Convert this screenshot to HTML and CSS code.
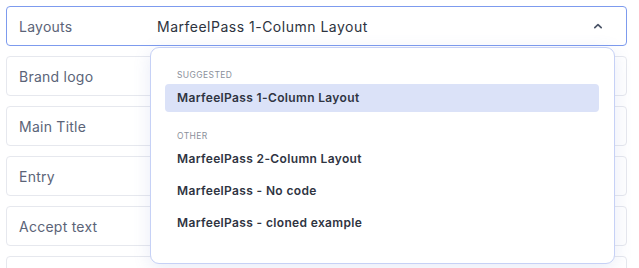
FILE: index.html
```html
<!DOCTYPE html>
<html lang="en">
<head>
    <meta charset="UTF-8">
    <title>Layouts</title>
    <link rel="stylesheet" href="styles.css">
</head>
<body>
    <div class="form">
        <!-- Layout selector (open) -->
        <div class="field field-active">
            <span class="field-label">Layouts</span>
            <span class="field-value">MarfeelPass 1-Column Layout</span>
            <svg class="chevron" width="12" height="12" viewBox="0 0 12 12">
                <path d="M2.8 7.6 L6 4.6 L9.2 7.6" fill="none" stroke="#4b5568" stroke-width="1.7" stroke-linecap="round" stroke-linejoin="round"/>
            </svg>

            <div class="dropdown">
                <div class="group-title">Suggested</div>
                <div class="option selected">MarfeelPass 1-Column Layout</div>

                <div class="group-title other">Other</div>
                <div class="option">MarfeelPass 2-Column Layout</div>
                <div class="option">MarfeelPass - No code</div>
                <div class="option">MarfeelPass - cloned example</div>
            </div>
        </div>

        <div class="field"><span class="field-label">Brand logo</span></div>
        <div class="field"><span class="field-label">Main Title</span></div>
        <div class="field"><span class="field-label">Entry</span></div>
        <div class="field"><span class="field-label">Accept text</span></div>
        <div class="field"><span class="field-label"></span></div>
    </div>
</body>
</html>
```

FILE: styles.css
```css
* {
    margin: 0;
    padding: 0;
    box-sizing: border-box;
}

body {
    font-family: Inter, 'Noto Sans', sans-serif;
    background: #fff;
    color: #2d3340;
    overflow: hidden;
}

.form {
    height: 100vh;
    overflow: hidden;
    padding: 6px 12px 0 6px;
    display: flex;
    flex-direction: column;
    gap: 10px;
}

/* Rows */
.field {
    position: relative;
    height: 40px;
    border: 1px solid #e6e8ee;
    border-radius: 4px;
    display: flex;
    align-items: center;
    padding: 0 12px;
    font-size: 14px;
    flex-shrink: 0;
}

.field-active {
    border-color: #7d9bee;
    z-index: 5;
}

.field-label {
    width: 138px;
    color: #5b6478;
    letter-spacing: 0.25px;
}

.field-value {
    flex: 1;
    color: #2d3340;
    letter-spacing: 0.5px;
}

.chevron {
    margin-right: 10px;
}

/* Dropdown */
.dropdown {
    position: absolute;
    top: 40px;
    left: 143px;
    width: 465px;
    height: 217px;
    background: #fff;
    border: 1px solid #c6d1f6;
    border-radius: 9px;
    box-shadow: 0 4px 18px rgba(90, 110, 200, 0.14);
    padding: 20px 15px 0 14px;
}

.group-title {
    height: 14px;
    line-height: 14px;
    font-size: 8.5px;
    letter-spacing: 0.4px;
    text-transform: uppercase;
    color: #8b909b;
    padding-left: 12px;
    margin-bottom: 2px;
}

.group-title.other {
    margin-top: 17px;
}

.option {
    height: 28px;
    line-height: 28px;
    padding-left: 12px;
    border-radius: 4px;
    font-size: 12px;
    font-weight: 600;
    color: #2f3442;
    letter-spacing: 0.35px;
    margin-bottom: 4px;
}

.option.selected {
    background: #dbe2f8;
}
```
